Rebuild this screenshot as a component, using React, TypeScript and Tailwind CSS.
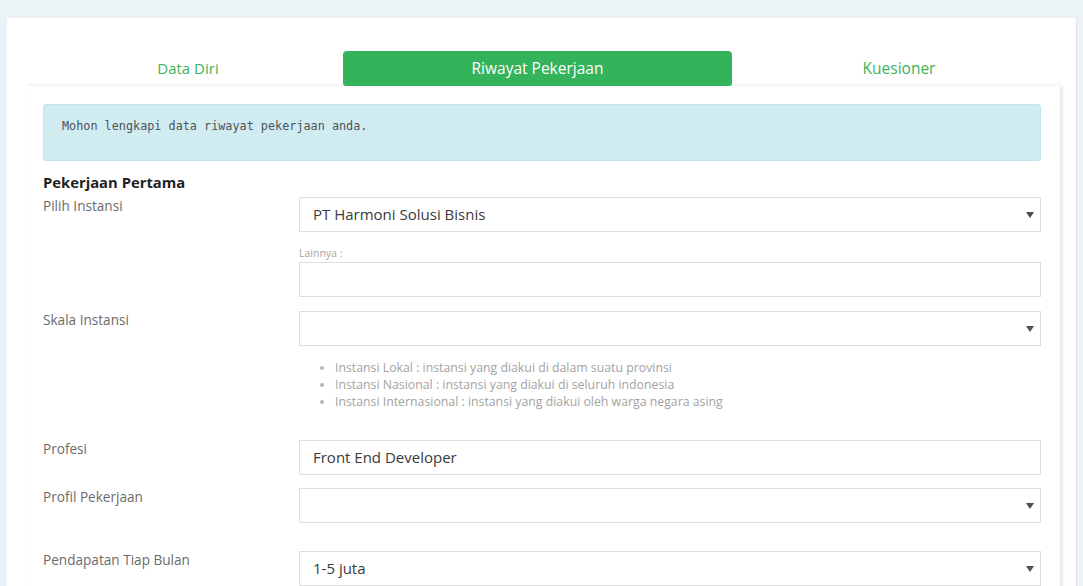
import React from 'react';

const font = { fontFamily: '"Open Sans", "Liberation Sans", sans-serif' };

function Caret() {
  return (
    <svg width="8" height="6" viewBox="0 0 8 6" className="shrink-0">
      <path d="M0 0h8L4 6z" fill="#4b4f56" />
    </svg>
  );
}

function Field({ value, select }: { value?: string; select?: boolean }) {
  return (
    <div className="h-[35px] border border-[#dedede] flex items-center justify-between pl-[13px] pr-[6px] text-[15px] text-[#3a3a3a]">
      <span>{value}</span>
      {select && <Caret />}
    </div>
  );
}

function Row({ label, children, className = '' }: { label: string; children: React.ReactNode; className?: string }) {
  return (
    <div className={`grid grid-cols-[256px_1fr] ${className}`}>
      <div className="text-[13.6px] text-[#6b6b6b] leading-[18px] pt-[0px]">{label}</div>
      <div>{children}</div>
    </div>
  );
}

export default function App() {
  return (
    <div className="min-h-screen bg-[#ebf3f7] pt-[18px] pl-[7px] pr-[6px]" style={font}>
      <div className="bg-white border-r border-[#dde3e6] pt-[33px] pl-[18px] pr-[16px] h-[568px] overflow-hidden">
        <div className="flex ml-[8px] h-[35px] text-[15.5px]">
          <div className="w-[310px] shrink-0 flex items-center justify-center text-[#3db35b] text-[15px]">Data Diri</div>
          <div className="w-[389px] shrink-0 flex items-center justify-center bg-[#33b35a] text-white rounded-t-[4px] rounded-b-[3px]">Riwayat Pekerjaan</div>
          <div className="w-[334px] shrink-0 flex items-center justify-center text-[#3db35b]">Kuesioner</div>
        </div>
        <div className="bg-white shadow-[2px_0_4px_rgba(0,0,0,0.12)] pt-[18px] pl-[18px] pr-[19px] h-[520px]">
          <div className="h-[57px] bg-[#d1ecf1] border border-[#bee5eb] rounded-[3px] pl-[18px] pt-[13px] text-[11.8px] text-[#4d5358]" style={{ fontFamily: '"DejaVu Sans Mono", monospace' }}>
            Mohon lengkapi data riwayat pekerjaan anda.
          </div>
          <div className="mt-[11px] text-[14.8px] font-bold text-[#1f1f1f] leading-[20px]">Pekerjaan Pertama</div>
          <Row label="Pilih Instansi" className="mt-[5px]">
            <Field value="PT Harmoni Solusi Bisnis" select />
            <div className="mt-[13px] text-[10.5px] text-[#a5a5a5] leading-[17px]">Lainnya :</div>
            <Field />
          </Row>
          <Row label="Skala Instansi" className="mt-[14px]">
            <Field select />
            <ul className="mt-[13px] pl-[36px] list-disc text-[12.3px] leading-[17px] text-[#a3a3a3] marker:text-[#b5b5b5]">
              <li>Instansi Lokal : instansi yang diakui di dalam suatu provinsi</li>
              <li>Instansi Nasional : instansi yang diakui di seluruh indonesia</li>
              <li>Instansi Internasional : instansi yang diakui oleh warga negara asing</li>
            </ul>
          </Row>
          <Row label="Profesi" className="mt-[30px]">
            <Field value="Front End Developer" />
          </Row>
          <Row label="Profil Pekerjaan" className="mt-[13px]">
            <Field select />
          </Row>
          <Row label="Pendapatan Tiap Bulan" className="mt-[28px]">
            <Field value="1-5 juta" select />
          </Row>
        </div>
      </div>
    </div>
  );
}
